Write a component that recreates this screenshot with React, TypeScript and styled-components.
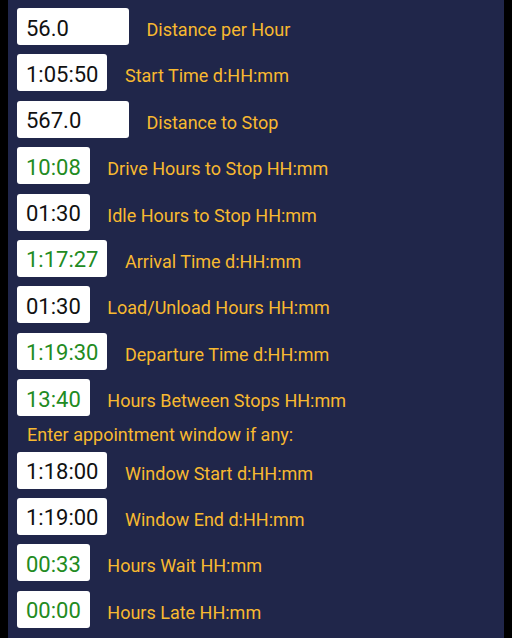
import React from "react";
import styled, { createGlobalStyle } from "styled-components";

const GlobalStyle = createGlobalStyle`
  html, body {
    margin: 0;
    padding: 0;
    background: #000000;
  }
  body {
    font-family: Roboto, "Noto Sans", "Liberation Sans", sans-serif;
  }
`;

const Screen = styled.div`
  margin: 0 8px;
  height: 638px;
  background: #20264a;
  box-sizing: border-box;
  padding: 8px 0 0 9px;
  display: flex;
  flex-direction: column;
  gap: 9.4px;
  overflow: hidden;
`;

const Row = styled.div`
  display: flex;
  align-items: center;
  gap: 17.5px;
  height: 37px;
`;

const Field = styled.div<{ $computed?: boolean; $wide?: boolean }>`
  box-sizing: border-box;
  height: 37px;
  min-width: ${(p) => (p.$wide ? "112px" : "0")};
  padding: 3px 9px 0 9px;
  background: #ffffff;
  border-radius: 3px;
  display: flex;
  align-items: center;
  font-size: 22px;
  color: ${(p) => (p.$computed ? "#228b22" : "#111111")};
  white-space: nowrap;
`;

const Label = styled.span`
  font-size: 18px;
  color: #f8b930;
  margin-top: 6px;
  white-space: nowrap;
`;

const Heading = styled.div`
  font-size: 18px;
  color: #f8b930;
  height: 15.7px;
  line-height: 15.7px;
  padding-left: 10px;
  margin-top: 1px;
  white-space: nowrap;
`;

type Item = { value: string; label: string; computed?: boolean; wide?: boolean };

const top: Item[] = [
  { value: "56.0", label: "Distance per Hour", wide: true },
  { value: "1:05:50", label: "Start Time d:HH:mm" },
  { value: "567.0", label: "Distance to Stop", wide: true },
  { value: "10:08", label: "Drive Hours to Stop HH:mm", computed: true },
  { value: "01:30", label: "Idle Hours to Stop HH:mm" },
  { value: "1:17:27", label: "Arrival Time d:HH:mm", computed: true },
  { value: "01:30", label: "Load/Unload Hours HH:mm" },
  { value: "1:19:30", label: "Departure Time d:HH:mm", computed: true },
  { value: "13:40", label: "Hours Between Stops HH:mm", computed: true },
];

const bottom: Item[] = [
  { value: "1:18:00", label: "Window Start d:HH:mm" },
  { value: "1:19:00", label: "Window End d:HH:mm" },
  { value: "00:33", label: "Hours Wait HH:mm", computed: true },
  { value: "00:00", label: "Hours Late HH:mm", computed: true },
];

const FieldRow = ({ item }: { item: Item }) => (
  <Row>
    <Field $computed={item.computed} $wide={item.wide}>
      {item.value}
    </Field>
    <Label>{item.label}</Label>
  </Row>
);

export default function App() {
  return (
    <>
      <GlobalStyle />
      <Screen>
        {top.map((it, i) => (
          <FieldRow key={"t" + i} item={it} />
        ))}
        <Heading>Enter appointment window if any:</Heading>
        {bottom.map((it, i) => (
          <FieldRow key={"b" + i} item={it} />
        ))}
      </Screen>
    </>
  );
}
